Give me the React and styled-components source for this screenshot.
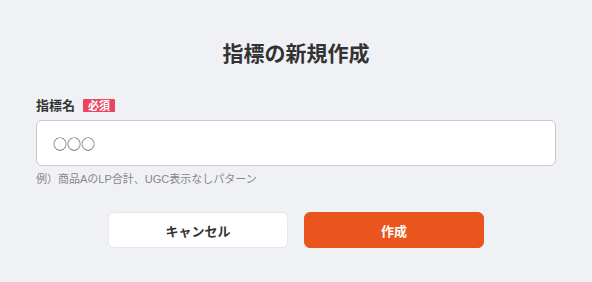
import React from "react";
import styled, { createGlobalStyle } from "styled-components";

const Global = createGlobalStyle`
  html, body { margin: 0; padding: 0; background: #f0f1f5; }
  body { font-family: "Noto Sans CJK JP", "Noto Sans", sans-serif; color: #333; }
  * { box-sizing: border-box; }
`;

const Page = styled.div`
  width: 592px;
  height: 282px;
  padding: 37px 36px 0;
  display: flex;
  flex-direction: column;
`;

const Title = styled.h2`
  margin: 0;
  font-size: 21px;
  line-height: 30px;
  font-weight: 700;
  text-align: center;
  color: #333;
`;

const Field = styled.div`
  margin-top: 30px;
  display: flex;
  flex-direction: column;
`;

const LabelRow = styled.div`
  display: flex;
  align-items: center;
  gap: 8px;
  height: 16px;
`;

const Label = styled.label`
  font-size: 13px;
  line-height: 16px;
  font-weight: 700;
  color: #333;
`;

const Badge = styled.span`
  display: inline-flex;
  align-items: center;
  justify-content: center;
  width: 32px;
  height: 13px;
  background: #e8475f;
  color: #fff;
  font-size: 11px;
  font-weight: 700;
  line-height: 13px;
  border-radius: 1px;
`;

const Input = styled.input`
  margin-top: 7px;
  width: 520px;
  height: 46px;
  padding: 0 16px;
  border: 1px solid #c8c8cc;
  border-radius: 6px;
  background: #fff;
  font-family: "Noto Sans CJK JP", sans-serif;
  font-size: 14px;
  color: #333;
  outline: none;
`;

const Help = styled.p`
  margin: 5px 0 0;
  font-family: "Liberation Sans", "Noto Sans CJK JP", sans-serif;
  font-size: 11px;
  line-height: 16px;
  color: #888;
`;

const Actions = styled.div`
  margin-top: 25px;
  display: flex;
  justify-content: center;
  gap: 16px;
`;

const Button = styled.button`
  width: 180px;
  height: 36px;
  border-radius: 6px;
  font-family: "Noto Sans CJK JP", sans-serif;
  font-size: 13px;
  font-weight: 700;
  cursor: pointer;
  border: 1px solid ${(p) => (p.$primary ? "#e9551d" : "#e6e7eb")};
  background: ${(p) => (p.$primary ? "#e9551d" : "#fff")};
  color: ${(p) => (p.$primary ? "#fff" : "#333")};
`;

export default function App() {
  return (
    <>
      <Global />
      <Page>
        <Title>指標の新規作成</Title>
        <Field>
          <LabelRow>
            <Label>指標名</Label>
            <Badge>必須</Badge>
          </LabelRow>
          <Input defaultValue="○○○" />
          <Help>例）商品AのLP合計、UGC表示なしパターン</Help>
        </Field>
        <Actions>
          <Button>キャンセル</Button>
          <Button $primary>作成</Button>
        </Actions>
      </Page>
    </>
  );
}
